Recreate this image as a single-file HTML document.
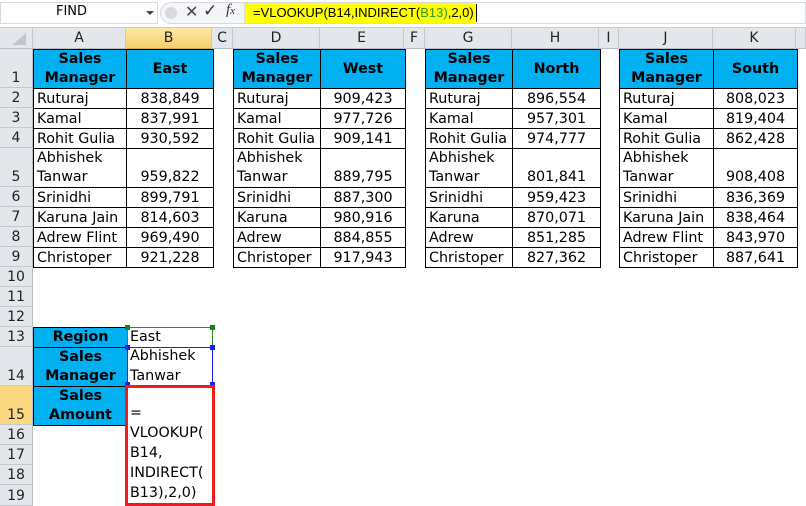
<!DOCTYPE html>
<html><head><meta charset="utf-8"><style>
*{margin:0;padding:0;box-sizing:border-box}
body{width:806px;height:506px;overflow:hidden;background:#fff;position:relative;font-family:"DejaVu Sans","Liberation Sans",sans-serif;font-size:14.3px;color:#000}
.a{position:absolute}
.ch{position:absolute;top:28px;height:21px;background:#e3e6eb;border-right:1px solid #c5c9cf;border-bottom:1px solid #b9bec6;text-align:center;font-size:14px;line-height:20px;color:#222}
.rh{position:absolute;left:0;width:33px;background:#e3e6eb;border-bottom:1px solid #c5c9cf;border-right:1px solid #b9bec6;text-align:center;font-size:14px;color:#222;display:flex;align-items:flex-end;justify-content:center;padding-bottom:1px}
table{position:absolute;border-collapse:collapse;table-layout:fixed}
td{border:1px solid #000;padding:0 3px;vertical-align:bottom;line-height:18px;white-space:nowrap;overflow:hidden}
td.n{text-align:center}
tr.h td{background:#00b0f0;font-weight:bold;text-align:center;line-height:19px}
tr{height:20px}
tr.t{height:39px}
tr.t td{line-height:19px}
</style></head><body>
<!-- formula bar -->
<div class="a" style="left:0;top:0;width:806px;height:28px;background:#fff;border-bottom:1px solid #c9ccd1"></div>
<div class="a" style="left:0;top:2px;width:158px;height:22px;border:1px solid #d6d9dd;background:#fff"></div>
<div class="a" style="left:56px;top:4px;font-size:13px">FIND</div>
<div class="a" style="left:146px;top:11px;width:0;height:0;border-left:4px solid transparent;border-right:4px solid transparent;border-top:4px solid #444"></div>
<div class="a" style="left:160px;top:2px;width:85px;height:22px;background:#f4f5f7;border:1px solid #d6d9dd;border-radius:11px 0 0 11px"></div>
<div class="a" style="left:165px;top:7px;width:12px;height:12px;border-radius:50%;background:#d8dadd"></div>
<div class="a" style="left:185px;top:2px;font-size:16px;color:#444">✕</div>
<div class="a" style="left:203px;top:1px;font-size:17px;color:#333">✓</div>
<div class="a" style="left:226px;top:2px;font-size:15px;font-style:italic;font-family:'Liberation Serif',serif;color:#333">f<span style="font-size:11px">x</span></div>
<div class="a" style="left:245px;top:2px;width:561px;height:22px;background:#fff;border:1px solid #d6d9dd"></div>
<div class="a" style="left:245px;top:3px;width:230px;height:20px;background:#ffff00"></div>
<div class="a" style="left:253px;top:4px;font-size:13px;line-height:18px;font-family:'Liberation Sans',sans-serif;white-space:nowrap;padding-right:2px;border-right:1px solid #000">=VLOOKUP(B14,INDIRECT(<span style="color:#2a9a2a">B13)</span>,2,0)</div>
<!-- column headers -->
<div class="ch" style="left:0;width:33px"><div class="a" style="left:12px;top:5px;width:0;height:0;border-left:14px solid transparent;border-bottom:12px solid #c2c6cc"></div></div>
<div class="ch" style="left:33px;width:93px">A</div>
<div class="ch" style="left:126px;width:86px;background:linear-gradient(#fde8a8,#f6cf6a);border-bottom-color:#e0a83a">B</div>
<div class="ch" style="left:212px;width:21px">C</div>
<div class="ch" style="left:233px;width:87px">D</div>
<div class="ch" style="left:320px;width:84px">E</div>
<div class="ch" style="left:404px;width:21px">F</div>
<div class="ch" style="left:425px;width:87px">G</div>
<div class="ch" style="left:512px;width:87px">H</div>
<div class="ch" style="left:599px;width:20px">I</div>
<div class="ch" style="left:619px;width:94px">J</div>
<div class="ch" style="left:713px;width:83px">K</div>
<div class="ch" style="left:796px;width:10px"></div>
<!-- row headers -->
<div class="rh" style="top:49px;height:39px">1</div>
<div class="rh" style="top:88px;height:20px">2</div>
<div class="rh" style="top:108px;height:20px">3</div>
<div class="rh" style="top:128px;height:20px">4</div>
<div class="rh" style="top:148px;height:39px">5</div>
<div class="rh" style="top:187px;height:20px">6</div>
<div class="rh" style="top:207px;height:20px">7</div>
<div class="rh" style="top:227px;height:20px">8</div>
<div class="rh" style="top:247px;height:20px">9</div>
<div class="rh" style="top:267px;height:20px">10</div>
<div class="rh" style="top:287px;height:20px">11</div>
<div class="rh" style="top:307px;height:20px">12</div>
<div class="rh" style="top:327px;height:20px">13</div>
<div class="rh" style="top:347px;height:39px">14</div>
<div class="rh" style="top:386px;height:39px;background:#fcd980">15</div>
<div class="rh" style="top:425px;height:20px">16</div>
<div class="rh" style="top:445px;height:20px">17</div>
<div class="rh" style="top:465px;height:20px">18</div>
<div class="rh" style="top:485px;height:21px">19</div>

<table style="left:33px;top:49px;width:180px"><colgroup><col style="width:93px"><col style="width:87px"></colgroup>
<tr class="h t"><td>Sales<br>Manager</td><td style="vertical-align:middle">East</td></tr>
<tr><td>Ruturaj</td><td class="n">838,849</td></tr>
<tr><td>Kamal</td><td class="n">837,991</td></tr>
<tr><td>Rohit Gulia</td><td class="n">930,592</td></tr>
<tr class="t"><td>Abhishek<br>Tanwar</td><td class="n">959,822</td></tr>
<tr><td>Srinidhi</td><td class="n">899,791</td></tr>
<tr><td>Karuna Jain</td><td class="n">814,603</td></tr>
<tr><td>Adrew Flint</td><td class="n">969,490</td></tr>
<tr><td>Christoper</td><td class="n">921,228</td></tr>
</table>
<table style="left:233px;top:49px;width:172px"><colgroup><col style="width:87px"><col style="width:85px"></colgroup>
<tr class="h t"><td>Sales<br>Manager</td><td style="vertical-align:middle">West</td></tr>
<tr><td>Ruturaj</td><td class="n">909,423</td></tr>
<tr><td>Kamal</td><td class="n">977,726</td></tr>
<tr><td>Rohit Gulia</td><td class="n">909,141</td></tr>
<tr class="t"><td>Abhishek<br>Tanwar</td><td class="n">889,795</td></tr>
<tr><td>Srinidhi</td><td class="n">887,300</td></tr>
<tr><td>Karuna</td><td class="n">980,916</td></tr>
<tr><td>Adrew</td><td class="n">884,855</td></tr>
<tr><td>Christoper</td><td class="n">917,943</td></tr>
</table>
<table style="left:425px;top:49px;width:175px"><colgroup><col style="width:87px"><col style="width:88px"></colgroup>
<tr class="h t"><td>Sales<br>Manager</td><td style="vertical-align:middle">North</td></tr>
<tr><td>Ruturaj</td><td class="n">896,554</td></tr>
<tr><td>Kamal</td><td class="n">957,301</td></tr>
<tr><td>Rohit Gulia</td><td class="n">974,777</td></tr>
<tr class="t"><td>Abhishek<br>Tanwar</td><td class="n">801,841</td></tr>
<tr><td>Srinidhi</td><td class="n">959,423</td></tr>
<tr><td>Karuna</td><td class="n">870,071</td></tr>
<tr><td>Adrew</td><td class="n">851,285</td></tr>
<tr><td>Christoper</td><td class="n">827,362</td></tr>
</table>
<table style="left:619px;top:49px;width:178px"><colgroup><col style="width:94px"><col style="width:84px"></colgroup>
<tr class="h t"><td>Sales<br>Manager</td><td style="vertical-align:middle">South</td></tr>
<tr><td>Ruturaj</td><td class="n">808,023</td></tr>
<tr><td>Kamal</td><td class="n">819,404</td></tr>
<tr><td>Rohit Gulia</td><td class="n">862,428</td></tr>
<tr class="t"><td>Abhishek<br>Tanwar</td><td class="n">908,408</td></tr>
<tr><td>Srinidhi</td><td class="n">836,369</td></tr>
<tr><td>Karuna Jain</td><td class="n">838,464</td></tr>
<tr><td>Adrew Flint</td><td class="n">843,970</td></tr>
<tr><td>Christoper</td><td class="n">887,641</td></tr>
</table>
<table style="left:33px;top:327px;width:94px"><colgroup><col style="width:94px"></colgroup>
<tr class="h"><td>Region</td></tr>
<tr class="h t"><td>Sales<br>Manager</td></tr>
<tr class="h t"><td>Sales<br>Amount</td></tr>
</table>
<!-- B13 / B14 -->
<div class="a" style="left:127px;top:327px;width:86px;height:21px;border:1px solid #2e8b2e"></div>
<div class="a" style="left:130px;top:328px;line-height:19px">East</div>
<div class="a" style="left:125px;top:325px;width:5px;height:5px;background:#1a7f1a"></div>
<div class="a" style="left:210px;top:325px;width:5px;height:5px;background:#1a7f1a"></div>
<div class="a" style="left:127px;top:347px;width:86px;height:39px;border:1px solid #1a1aff"></div>
<div class="a" style="left:130px;top:347px;line-height:19.5px">Abhishek<br>Tanwar</div>
<div class="a" style="left:125px;top:345px;width:5px;height:5px;background:#1a1aff"></div>
<div class="a" style="left:210px;top:345px;width:5px;height:5px;background:#1a1aff"></div>
<div class="a" style="left:125px;top:382px;width:5px;height:5px;background:#1a1aff"></div>
<div class="a" style="left:210px;top:382px;width:5px;height:5px;background:#1a1aff"></div>
<!-- B15 -->
<div class="a" style="left:125px;top:385px;width:90px;height:121px;border:3px solid #ee1c1c"></div>
<div class="a" style="left:130px;top:403px;line-height:20px;white-space:nowrap">=<br>VLOOKUP(<br>B14,<br>INDIRECT(<br>B13),2,0)</div>
</body></html>
